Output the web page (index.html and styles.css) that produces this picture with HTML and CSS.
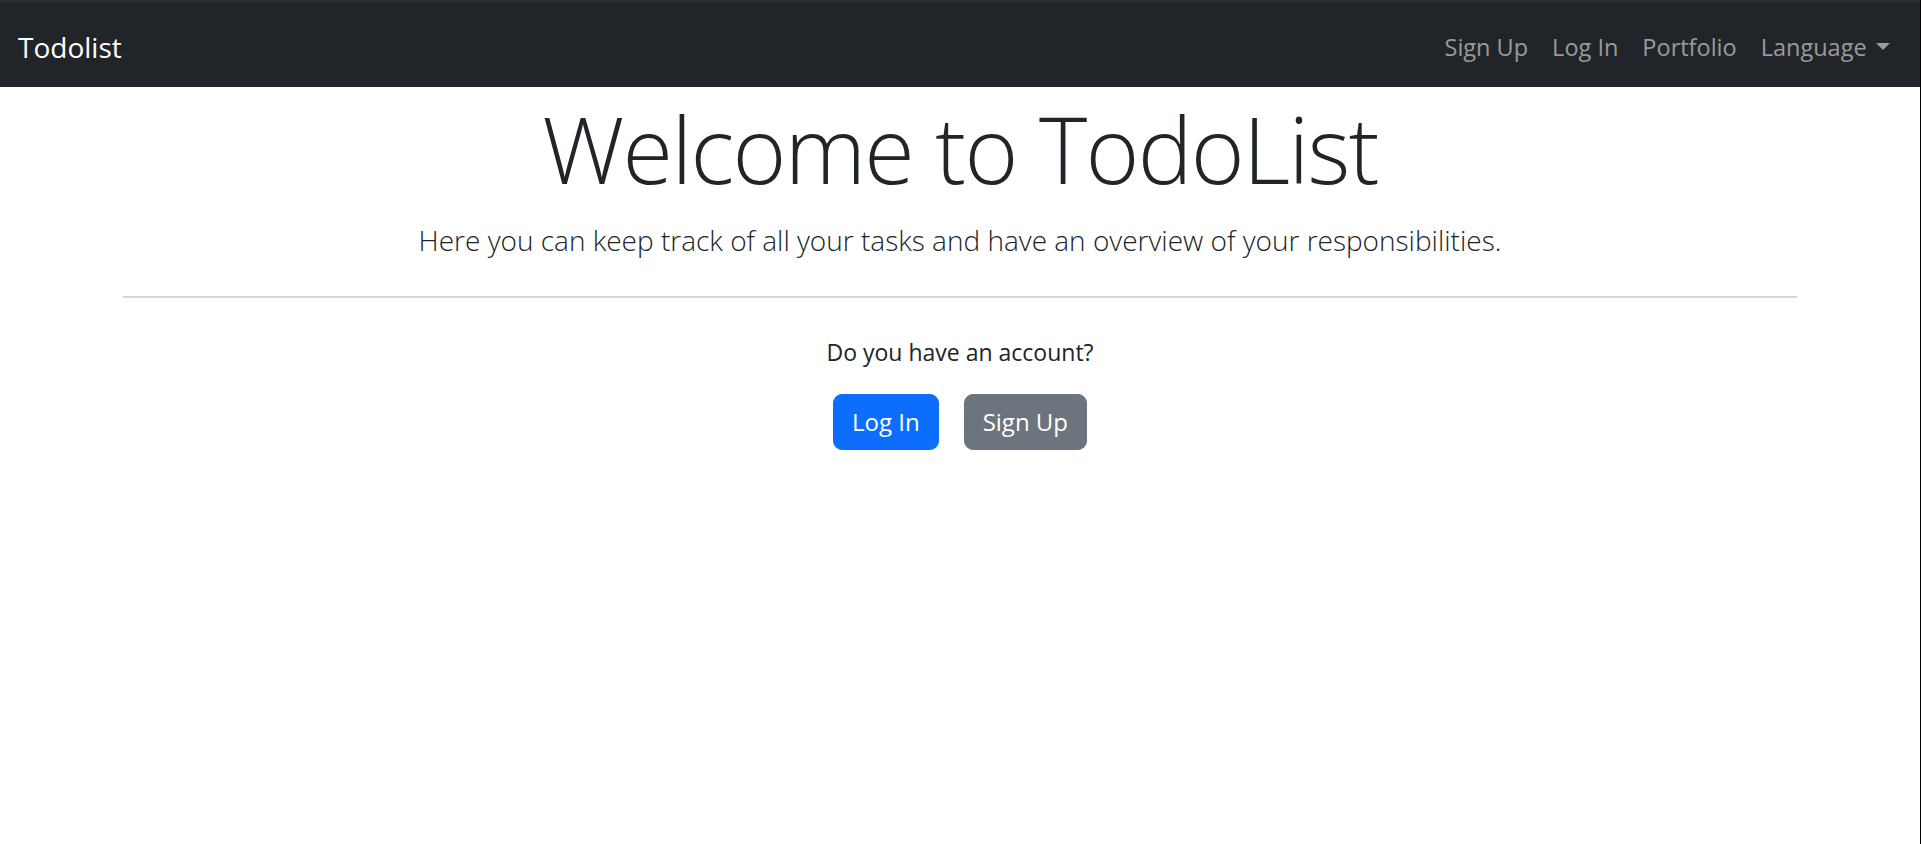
FILE: index.html
```html
<!DOCTYPE html>
<html lang="en">
<head>
<meta charset="utf-8">
<title>Todolist</title>
<link rel="stylesheet" href="styles.css">
</head>
<body>
<div class="topstrip"></div>
<nav class="navbar">
  <a class="brand" href="#">Todolist</a>
  <ul class="nav">
    <li><a class="nav-link" href="#">Sign Up</a></li>
    <li><a class="nav-link" href="#">Log In</a></li>
    <li><a class="nav-link" href="#">Portfolio</a></li>
    <li><a class="nav-link dropdown-toggle" href="#">Language</a></li>
  </ul>
</nav>
<main class="container">
  <h1 class="display">Welcome to TodoList</h1>
  <p class="lead">Here you can keep track of all your tasks and have an overview of your responsibilities.</p>
  <hr class="divider">
  <p class="question">Do you have an account?</p>
  <div class="actions">
    <a class="btn btn-primary" href="#">Log In</a>
    <a class="btn btn-secondary" href="#">Sign Up</a>
  </div>
</main>
</body>
</html>
```
FILE: styles.css
```css
html {
  background: #000;
}
body {
  margin: 0 1px 0 0;
  min-height: 100vh;
  background: #fff;
  font-family: "Open Sans", "Noto Sans", sans-serif;
  font-size: 24px;
  line-height: 1.5;
  color: #212529;
}
a {
  text-decoration: none;
}
.topstrip {
  height: 3px;
  background: #2b2a33;
}
.navbar {
  display: flex;
  align-items: center;
  justify-content: space-between;
  padding: 14px 18px 10px;
  background: #212529;
}
.brand {
  color: #fff;
  font-size: 28px;
  line-height: 45px;
  padding: 7.5px 0;
}
.nav {
  display: flex;
  list-style: none;
  margin: 0;
  padding: 0;
}
.nav-link {
  display: block;
  padding: 12px;
  color: rgba(255, 255, 255, 0.55);
  font-size: 23.5px;
  line-height: 36px;
}
.dropdown-toggle::after {
  content: "";
  display: inline-block;
  margin-left: 0.4em;
  vertical-align: 0.255em;
  border-top: 0.3em solid;
  border-right: 0.3em solid transparent;
  border-left: 0.3em solid transparent;
}
.container {
  max-width: 1674px;
  margin: 0 auto;
  padding: 4px 18px 0;
  text-align: center;
}
.display {
  margin: 0 0 12px;
  font-size: 92px;
  font-weight: 300;
  letter-spacing: -1.7px;
  line-height: 115px;
}
.lead {
  margin: 0 0 24px;
  font-size: 28px;
  font-weight: 300;
  line-height: 45px;
}
.divider {
  margin: 33px 0 36px;
  border: 0;
  border-top: 2px solid #d6d7d8;
  height: 0;
}
.question {
  margin: 0 0 24px;
  font-size: 23px;
  line-height: 36px;
}
.actions {
  display: flex;
  justify-content: center;
  gap: 25px;
}
.btn {
  display: inline-block;
  padding: 9px 18px;
  border: 1.5px solid transparent;
  border-radius: 9px;
  color: #fff;
  line-height: 36px;
}
.btn-primary {
  background: #0d6efd;
  border-color: #0d6efd;
}
.btn-secondary {
  background: #6c757d;
  border-color: #6c757d;
}
```
